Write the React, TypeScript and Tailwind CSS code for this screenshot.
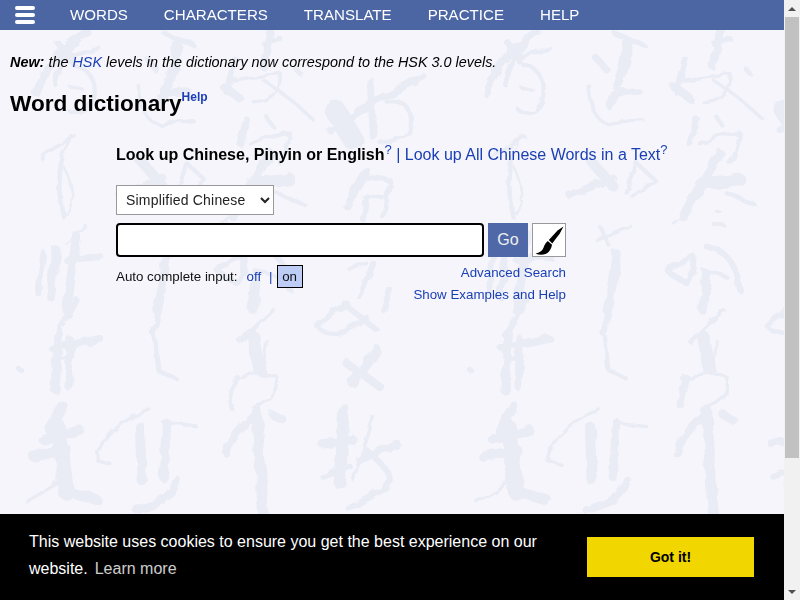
import React from 'react';

const NAV_ITEMS = ["WORDS", "CHARACTERS", "TRANSLATE", "PRACTICE", "HELP"];

// strokes traced from the tiled calligraphy backdrop: [path, width]
const FROM_RIGHT: [string, number][] = [
    ["M110 5C70 40 30 90 15 160", 14],
    ["M25 40L60 95", 14],
    ["M40 85L150 55", 10],
    ["M70 105C130 115 140 170 125 215C110 255 70 255 55 240", 10],
    ["M60 170L100 180", 8],
    ["M345 10L430 45", 12],
    ["M380 40C385 90 370 130 330 225", 22],
    ["M290 85L320 120", 16],
    ["M340 190L415 185", 16],
    ["M265 165C265 210 285 280 330 282L430 272", 8],
    ["M660 5L640 110", 18],
    ["M690 25L640 40", 12],
    ["M555 90C545 130 535 160 530 185", 16],
    ["M522 170L570 205", 20],
    ["M550 150L690 130C695 170 670 215 610 215", 8],
    ["M640 150C700 190 750 230 790 270", 8],
    ["M740 120L750 130", 12],
    ["M590 270L570 340", 16],
    ["M650 260L670 290", 10],
    ["M600 340C640 320 680 310 720 310C715 350 705 380 690 400", 10],
    ["M610 460L720 450", 30],
    ["M660 370C630 420 590 480 550 560", 22],
    ["M680 490L765 525", 10],
    ["M520 580L570 540", 6],
    ["M650 545L665 550", 8],
    ["M645 585L670 585", 10],
    ["M65 318C50 350 35 370 30 400C18 470 30 550 50 552C72 520 75 470 40 410", 6],
    ["M210 495L340 445", 18],
    ["M270 390L340 470", 24],
    ["M380 490L410 400L465 450L400 500", 10],
    ["M290 630L390 590", 10],
    ["M300 590L330 650", 8],
    ["M350 670C345 730 335 790 320 840", 20],
    ["M500 720L580 680C590 720 570 750 560 760L510 730", 14],
    ["M620 650C670 660 710 690 720 780", 14],
    ["M620 730L610 840", 22],
    ["M610 720L680 740", 10],
];

const FROM_LEFT: [string, number][] = [
    ["M260 5C200 40 140 100 110 190", 18],
    ["M175 40L215 85", 14],
    ["M225 320C170 350 130 370 125 385", 8],
    ["M190 370C175 430 175 500 190 560", 10],
    ["M130 670L115 790", 14],
    ["M170 660L150 800", 18],
    ["M230 620L200 840", 22],
    ["M260 590L200 640", 6],
    ["M200 690L300 680", 16],
];

const FROM_MIDDLE: [string, number][] = [
    ["M255 240L310 330", 50],
    ["M320 240L520 140", 18],
    ["M240 300L370 220", 16],
    ["M410 215C470 205 500 250 480 310L390 340", 10],
    ["M360 150L370 320", 16],
    ["M350 420L290 530", 16],
    ["M345 440L420 450L400 560", 12],
    ["M340 500L400 500", 8],
    ["M350 500L340 570", 12],
    ["M300 720L350 700", 8],
    ["M370 700L330 800", 14],
    ["M420 780L400 840", 14],
];

const FROM_BOTTOM: [string, number][] = [
    ["M230 0C210 40 190 80 165 105", 14],
    ["M155 145L300 115", 16],
    ["M175 100L165 270", 22],
    ["M210 120L205 260", 18],
    ["M170 180L215 170", 10],
    ["M55 205L68 215", 12],
    ["M480 20L460 100", 14],
    ["M465 110L475 210L525 232", 10],
    ["M820 30L720 125", 10],
    ["M760 110L780 210", 30],
    ["M800 120L790 205", 6],
    ["M700 240C740 225 800 215 830 230C840 270 820 300 770 320", 8],
    ["M710 230L690 320", 12],
    ["M950 75L1040 10", 14],
    ["M1030 10L1130 90", 14],
    ["M950 75C970 110 1040 110 1100 50", 10],
    ["M1130 150L1060 250", 24],
    ["M1040 190L1140 260", 20],
    ["M190 320L150 390", 24],
    ["M240 390L130 420", 22],
    ["M175 380L200 580", 36],
    ["M100 470L200 450", 24],
    ["M80 605L190 540", 8],
    ["M190 570L290 600", 24],
    ["M450 330C380 350 310 400 290 480L330 490", 8],
    ["M420 380L425 540", 24],
    ["M500 370L490 530", 22],
    ["M500 370L590 380", 8],
    ["M530 540C520 590 480 610 410 630", 20],
    ["M770 340C730 380 700 400 680 460", 18],
    ["M770 330L790 640", 26],
    ["M820 345L850 360", 20],
    ["M1030 330L1020 550", 30],
    ["M965 430L1060 420", 20],
    ["M970 530L1050 500", 14],
    ["M1120 350C1110 400 1090 440 1060 540", 8],
    ["M1080 480L1190 430", 18],
    ["M1100 450C1130 480 1170 510 1170 540C1130 590 1080 610 1040 620", 14],
];

function Strokes({ items, x, y }: { items: [string, number][]; x: number; y: number }) {
    return (
        <g transform={`translate(${x} ${y}) scale(0.3333)`}>
            {items.map(([d, w]) => (
                <path key={d} d={d} strokeWidth={w * 1.25} />
            ))}
        </g>
    );
}

function CalligraphyTile({ offset }: { offset: number }) {
    return (
        <g transform={`translate(${offset} 0)`}>
            <Strokes items={FROM_RIGHT} x={50} y={30} />
            <Strokes items={FROM_LEFT} x={0} y={30} />
            <Strokes items={FROM_MIDDLE} x={250} y={30} />
            <Strokes items={FROM_BOTTOM} x={0} y={300} />
        </g>
    );
}

function BrushIcon() {
    return (
        <svg viewBox="0 0 32 32" className="h-8 w-8" fill="#000">
            <path d="M30.5 2.5L24.5 6.5L19 12.5L15.8 16L19.3 19.6L22.2 15.5L26.5 10Z" />
            <path d="M14.8 17C12.5 18.8 11.5 21 10.5 23.8C9.3 27 6.5 28.8 2.5 29.5C7 31.7 13 31.2 16 27.5C17.8 25.2 18.8 22.8 19 20.8Z" />
        </svg>
    );
}

export default function App() {
    return (
        <div className="flex h-[600px] w-[800px] overflow-hidden bg-[#f5f5fb] font-['Liberation_Sans',Arial,sans-serif] text-black">
            <div className="relative flex-1 overflow-hidden">
                <svg
                    className="absolute inset-0 h-full w-full"
                    fill="none"
                    stroke="#e9ebf5"
                    strokeLinecap="round"
                    strokeLinejoin="round"
                    aria-hidden="true"
                >
                    <defs>
                        <filter id="ink" x="0" y="0" width="100%" height="100%" filterUnits="userSpaceOnUse">
                            <feTurbulence type="fractalNoise" baseFrequency="0.07" numOctaves="2" seed="4" />
                            <feDisplacementMap in="SourceGraphic" scale="7" />
                        </filter>
                    </defs>
                    <g filter="url(#ink)">
                        <CalligraphyTile offset={0} />
                        <CalligraphyTile offset={450} />
                    </g>
                </svg>

                <div className="relative">
                    <nav className="flex h-[30px] items-center bg-[#4c66a4] pl-[15px] text-[15.1px] text-white">
                        <div className="mr-[35px] flex w-5 flex-col gap-[3px]">
                            <span className="h-1 rounded-full bg-white" />
                            <span className="h-1 rounded-full bg-white" />
                            <span className="h-1 rounded-full bg-white" />
                        </div>
                        <ul className="flex items-center gap-9">
                            {NAV_ITEMS.map((name) => (
                                <li key={name}>{name}</li>
                            ))}
                        </ul>
                    </nav>

                    <p className="ml-[10px] mt-[23px] text-[14.4px] leading-[18px] italic">
                        <b>New:</b> the <a className="text-[#1a3fb5]">HSK</a> levels in the dictionary now correspond to the HSK 3.0 levels.
                    </p>
                    <h1 className="ml-[10px] mt-[18px] text-[22.6px] leading-[30px] font-bold">
                        Word dictionary
                        <sup className="relative -top-[10px] align-baseline text-[12px] text-[#1a3fb5]">Help</sup>
                    </h1>

                    <div className="ml-[116px] mt-[24px] w-[450px]">
                        <div className="whitespace-nowrap text-[16px] leading-[24px]">
                            <b>Look up Chinese, Pinyin or English</b>
                            <sup className="relative -top-[6px] align-baseline text-[13px] text-[#1a3fb5]">?</sup>
                            <span className="text-[#1a3fb5]"> | Look up All Chinese Words in a Text</span>
                            <sup className="relative -top-[6px] align-baseline text-[13px] text-[#1a3fb5]">?</sup>
                        </div>

                        <select className="mt-[18px] block h-[30px] w-[158px] border border-[#999] bg-white pl-[5px] text-[14px] tracking-[0.2px] text-[#222]">
                            <option>Simplified Chinese</option>
                        </select>

                        <div className="mt-2 flex h-[34px] gap-1">
                            <input className="h-full w-[368px] rounded-[4px] border-2 border-black bg-white" />
                            <button className="h-full w-10 bg-[#4f68a8] text-[16px] text-[#f0f0f0]">Go</button>
                            <button className="flex h-full w-[34px] items-center justify-center border border-[#999] bg-white">
                                <BrushIcon />
                            </button>
                        </div>

                        <div className="mt-2 flex justify-between">
                            <div className="flex h-[23px] items-center text-[13.33px] text-[#111]">
                                <span>Auto complete input:</span>
                                <a className="ml-[9px] text-[#1a3fb5]">off</a>
                                <span className="ml-[8px] text-[#1a3fb5]">|</span>
                                <span className="ml-[4px] flex h-[23px] w-[26px] items-center justify-center border border-black bg-[#bdcdf5]">on</span>
                            </div>
                            <div className="-mt-[3px] flex flex-col items-end text-[13.33px] leading-[22px] text-[#1a3fb5]">
                                <a>Advanced Search</a>
                                <a>Show Examples and Help</a>
                            </div>
                        </div>
                    </div>
                </div>

                <div className="absolute inset-x-0 bottom-0 flex h-[86px] items-center justify-between bg-black pb-1 pl-[29px] pr-[30px] text-[16px] leading-[27px] text-white">
                    <div className="w-[520px]">
                        <div>This website uses cookies to ensure you get the best experience on our</div>
                        <div className="flex gap-[7px]">
                            <span>website.</span>
                            <a className="opacity-80">Learn more</a>
                        </div>
                    </div>
                    <button className="mt-1 h-10 w-[167px] bg-[#f1d600] text-[14px] font-bold text-black">Got it!</button>
                </div>
            </div>

            <div className="flex w-4 flex-col bg-[#f1f1f1]">
                <div className="flex h-[17px] items-center justify-center">
                    <span className="h-0 w-0 border-x-[4px] border-b-[4px] border-x-transparent border-b-[#505050]" />
                </div>
                <div className="mx-[1px] h-[441px] bg-[#c1c1c1]" />
                <div className="flex-1" />
                <div className="flex h-[17px] items-center justify-center">
                    <span className="h-0 w-0 border-x-[4px] border-t-[4px] border-x-transparent border-t-[#505050]" />
                </div>
            </div>
        </div>
    );
}
